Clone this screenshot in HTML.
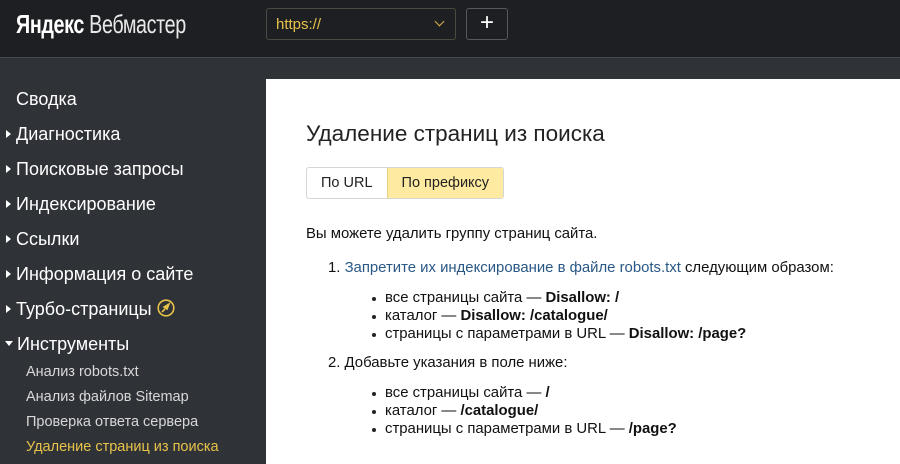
<!DOCTYPE html>
<html><head><meta charset="utf-8"><style>
*{margin:0;padding:0;box-sizing:border-box}
body{width:900px;height:464px;overflow:hidden;background:#2f3237;font-family:"Liberation Sans",Arial,sans-serif;position:relative}
.hdr{position:absolute;left:0;top:0;width:900px;height:58px;background:#1e1f22;border-bottom:1px solid #45484d}
.logo{position:absolute;left:16px;top:9px;color:#fff;font-size:26px;transform:scaleX(0.76);transform-origin:left top;white-space:nowrap;letter-spacing:-0.5px}
.logo b{font-weight:bold}
.logo span{font-weight:normal;color:#e8e8e8}
.sel{position:absolute;left:266px;top:8px;width:190px;height:32px;border:1px solid #4b4a40;border-radius:3px;color:#e8c34a;font-size:15px;padding:7px 9px}
.sel i{position:absolute;right:12px;top:9px;width:7px;height:7px;border-right:1.5px solid #d4b448;border-bottom:1.5px solid #d4b448;transform:rotate(45deg)}
.plus{position:absolute;left:466px;top:8px;width:42px;height:32px;border:1px solid #55585d;border-radius:3px;color:#fff;font-size:24px;text-align:center;line-height:28px}
.nav{position:absolute;left:0;top:83px;color:#fff;font-size:18px}
.nav div{position:absolute;white-space:nowrap}
.tri{display:inline-block;width:0;height:0;border-left:5px solid #fff;border-top:4px solid transparent;border-bottom:4px solid transparent;margin:0 5px 2px 6px;vertical-align:middle}
.trid{display:inline-block;width:0;height:0;border-top:5px solid #fff;border-left:4px solid transparent;border-right:4px solid transparent;margin:0 4px 3px 5px;vertical-align:middle}
.sub{font-size:14.5px;color:#d8d8d8}
.main{position:absolute;left:266px;top:79px;width:634px;height:385px;background:#fff;color:#000}
h1{position:absolute;left:40px;top:42px;font-size:22.5px;font-weight:normal;color:#222}
.tabs{position:absolute;left:40px;top:88px;height:32px;display:flex;border:1px solid #d6d6d6;border-radius:3px;font-size:14.5px}
.tabs div{padding:7px 14px;color:#222}
.tabs .a{background:#feeaa0;border-left:1px solid #e5cf80}
.t{position:absolute;font-size:14.9px;color:#111;white-space:nowrap}
.lnk{color:#2a5885}
.dot{position:absolute;width:4px;height:4px;border-radius:50%;background:#222}
</style></head><body>
<div class="hdr">
<div class="logo"><b>Яндекс</b> <span>Вебмастер</span></div>
<div class="sel">https://<i></i></div>
<div class="plus">+</div>
</div>
<div class="nav">
<div style="left:16px;top:6px">Сводка</div>
<div style="left:0;top:41px"><span class="tri"></span>Диагностика</div>
<div style="left:0;top:76px"><span class="tri"></span>Поисковые запросы</div>
<div style="left:0;top:111px"><span class="tri"></span>Индексирование</div>
<div style="left:0;top:146px"><span class="tri"></span>Ссылки</div>
<div style="left:0;top:181px"><span class="tri"></span>Информация о сайте</div>
<div style="left:0;top:216px"><span class="tri"></span>Турбо-страницы <svg width="18" height="18" viewBox="0 0 18 18" style="vertical-align:-2px"><circle cx="9" cy="9" r="7.8" fill="none" stroke="#e8c34a" stroke-width="1.6"/><path d="M5 13 L8 10 M7 8 L12 5 L10 10 Z" stroke="#e8c34a" stroke-width="1.6" fill="#e8c34a"/></svg></div>
<div style="left:0;top:251px"><span class="trid"></span>Инструменты</div>
<div class="sub" style="left:26px;top:281px">Анализ robots.txt</div>
<div class="sub" style="left:26px;top:306px">Анализ файлов Sitemap</div>
<div class="sub" style="left:26px;top:331px">Проверка ответа сервера</div>
<div class="sub" style="left:26px;top:356px;color:#e8c34a">Удаление страниц из поиска</div>
</div>
<div class="main">
<h1>Удаление страниц из поиска</h1>
<div class="tabs"><div>По URL</div><div class="a">По префиксу</div></div>
<div class="t" style="left:40px;top:147px">Вы можете удалить группу страниц сайта.</div>
<div class="t" style="left:62px;top:181px">1. <span class="lnk">Запретите их индексирование в файле robots.txt</span> следующим образом:</div>
<div class="dot" style="left:106px;top:218px"></div><div class="t" style="left:119px;top:211px">все страницы сайта — <b>Disallow: /</b></div>
<div class="dot" style="left:106px;top:236px"></div><div class="t" style="left:119px;top:229px">каталог — <b>Disallow: /catalogue/</b></div>
<div class="dot" style="left:106px;top:254px"></div><div class="t" style="left:119px;top:247px">страницы с параметрами в URL — <b>Disallow: /page?</b></div>
<div class="t" style="left:62px;top:276px">2. Добавьте указания в поле ниже:</div>
<div class="dot" style="left:106px;top:313px"></div><div class="t" style="left:119px;top:306px">все страницы сайта — <b>/</b></div>
<div class="dot" style="left:106px;top:331px"></div><div class="t" style="left:119px;top:324px">каталог — <b>/catalogue/</b></div>
<div class="dot" style="left:106px;top:349px"></div><div class="t" style="left:119px;top:342px">страницы с параметрами в URL — <b>/page?</b></div>
</div>
</body></html>
